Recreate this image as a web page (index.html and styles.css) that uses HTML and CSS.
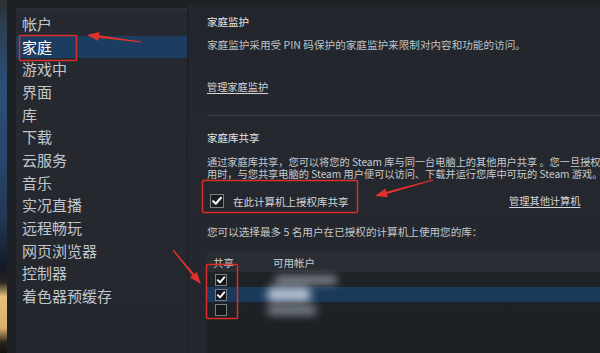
FILE: index.html
```html
<!DOCTYPE html>
<html lang="zh-CN">
<head>
<meta charset="utf-8">
<link rel="stylesheet" href="styles.css">
</head>
<body>
<div class="page">
  <div class="wall"></div>
  <div class="frame">
    <nav class="sidebar">
      <div class="item">帐户</div>
      <div class="item active">家庭</div>
      <div class="item">游戏中</div>
      <div class="item">界面</div>
      <div class="item">库</div>
      <div class="item">下载</div>
      <div class="item">云服务</div>
      <div class="item">音乐</div>
      <div class="item">实况直播</div>
      <div class="item">远程畅玩</div>
      <div class="item">网页浏览器</div>
      <div class="item">控制器</div>
      <div class="item">着色器预缓存</div>
    </nav>
    <main class="content">
      <div class="heading">家庭监护</div>
      <div class="desc">家庭监护采用受 PIN 码保护的家庭监护来限制对内容和功能的访问。</div>
      <div class="link first-link">管理家庭监护</div>
      <div class="sep"></div>
      <div class="heading h2">家庭库共享</div>
      <div class="para">
        <div>通过家庭库共享，您可以将您的 Steam 库与同一台电脑上的其他用户共享 。您一旦授权</div>
        <div>用时，与您共享电脑的 Steam 用户便可以访问、下载并运行您库中可玩的 Steam 游戏。</div>
      </div>
      <div class="checkrow">
        <div class="auth">
          <span class="box big checked"><svg viewBox="0 0 14 14" width="12" height="12"><path d="M2.5 7.2 L5.6 10.2 L11.6 3.2" fill="none" stroke="#fff" stroke-width="2.4" stroke-linecap="round" stroke-linejoin="round"/></svg></span>
          <span class="auth-label">在此计算机上授权库共享</span>
        </div>
        <span class="link">管理其他计算机</span>
      </div>
      <div class="note">您可以选择最多 5 名用户在已授权的计算机上使用您的库：</div>
      <div class="table">
        <div class="thead">
          <span class="col1">共享</span>
          <span class="col2">可用帐户</span>
        </div>
        <div class="row">
          <span class="col1"><span class="box small checked"><svg viewBox="0 0 14 14" width="10" height="10"><path d="M2.5 7.2 L5.6 10.2 L11.6 3.2" fill="none" stroke="#fff" stroke-width="2.6" stroke-linecap="round" stroke-linejoin="round"/></svg></span></span>
          <span class="col2"><span class="blur b1"></span></span>
        </div>
        <div class="row selected">
          <span class="col1"><span class="box small checked"><svg viewBox="0 0 14 14" width="10" height="10"><path d="M2.5 7.2 L5.6 10.2 L11.6 3.2" fill="none" stroke="#fff" stroke-width="2.6" stroke-linecap="round" stroke-linejoin="round"/></svg></span></span>
          <span class="col2"><span class="blur b2"></span></span>
        </div>
        <div class="row">
          <span class="col1"><span class="box small"></span></span>
          <span class="col2"><span class="blur b3"></span></span>
        </div>
      </div>
    </main>
  </div>
  <svg class="marks" width="600" height="353" viewBox="0 0 600 353">
    <g fill="none" stroke="#d8302a" stroke-width="1.5">
      <rect x="19.5" y="35.5" width="57" height="25" rx="1"/>
      <rect x="202.5" y="180.5" width="155" height="32" rx="1"/>
      <rect x="206.5" y="264.5" width="31" height="54" rx="1"/>
    </g>
    <g fill="#e0322b">
      <polygon points="141.06,41.5 99.05,35.35 99.48,32.08 87,35 98.32,41.0 98.75,37.73 140.94,42.5"/>
      <polygon points="433.16,180.58 386.89,193.97 387.77,197.15 375,196 385.37,188.47 386.25,191.65 432.84,179.42"/>
      <polygon points="172.54,250.38 192.44,275.5 189.9,277.6 201,284 196.84,271.88 194.3,273.98 173.46,249.62"/>
    </g>
  </svg>
</div>
</body>
</html>
```
FILE: styles.css
```css
* { box-sizing: border-box; }
html, body {
  margin: 0;
  padding: 0;
  width: 600px;
  height: 353px;
  overflow: hidden;
  background: #1c1f24;
  font-family: "Noto Sans CJK SC", "Noto Sans", sans-serif;
}
.page {
  position: relative;
  display: flex;
  width: 600px;
  height: 353px;
}
.wall {
  width: 7px;
  flex: none;
  background: linear-gradient(180deg, #2c3133 0%, #2d3f52 8%, #2b4f7a 25%, #2a466c 45%, #213754 62%, #141a26 76%, #2a241c 80%, #e4c07c 84%, #d8b06a 93%, #2a241c 97%, #111 100%);
}
.frame {
  flex: 1;
  display: flex;
  background: #1d2025;
  padding-left: 9px;
  padding-top: 8px;
}
.sidebar {
  width: 172px;
  flex: none;
  background: linear-gradient(180deg, #2d3037 0px, #262930 5px, #24272d 100%);
  padding-top: 5px;
  border-right: 1px solid #1a1c21;
}
.item {
  height: 22.67px;
  line-height: 22.67px;
  padding-left: 6px;
  font-size: 15px;
  color: #c3c6cb;
  white-space: nowrap;
}
.item.active {
  background: #1c3c60;
  color: #ffffff;
}
.content {
  flex: 1;
  margin-top: -8px;
  padding: 15px 0 0 19px;
  background: linear-gradient(180deg, #1c1e23 0px, #22252b 6px, #25282e 40%, #23262c 100%);
  overflow: hidden;
  white-space: nowrap;
  color: #bfc3c8;
  font-size: 10px;
}
.heading {
  line-height: 14px;
  height: 14px;
  font-size: 10.5px;
  color: #e4e7ea;
}
.desc {
  margin-top: 9px;
  line-height: 14px;
  height: 14px;
  font-size: 10.6px;
}
.link {
  line-height: 14px;
  height: 14px;
  font-size: 10.2px;
  color: #d2d5d9;
  text-decoration: underline;
  text-underline-offset: 2px;
}
.first-link {
  margin-top: 28px;
}
.sep {
  margin-top: 21px;
  height: 1px;
  background: #40444c;
}
.h2 {
  margin-top: 15px;
}
.para {
  margin-top: 11px;
  line-height: 12px;
  font-size: 10.2px;
  color: #c8ccd0;
}
.checkrow {
  margin-top: 14px;
  height: 14px;
  display: flex;
  align-items: center;
  justify-content: space-between;
  padding-right: 22px;
}
.auth {
  display: flex;
  align-items: center;
  padding-left: 3px;
}
.auth-label {
  margin-left: 9px;
  color: #d4d7db;
  font-size: 10.5px;
}
.box {
  display: inline-flex;
  align-items: center;
  justify-content: center;
  border: 1px solid #7a7e85;
  background: #1a1c21;
}
.box.big {
  width: 14px;
  height: 14px;
}
.box.small {
  width: 12px;
  height: 12px;
  background: #15171b;
}
.note {
  margin-top: 17px;
  line-height: 14px;
  height: 14px;
  font-size: 10.6px;
  color: #c3c7cc;
}
.table {
  margin-top: 13px;
  background: linear-gradient(180deg, #1f2227 0%, #1c1f24 100%);
  height: 120px;
}
.thead {
  height: 20px;
  display: flex;
  align-items: center;
  background: #2a2d34;
  color: #c9ccd1;
  font-size: 10.5px;
}
.col1 {
  width: 66px;
  padding-left: 6px;
  display: flex;
  align-items: center;
}
.row .col1 {
  padding-left: 8px;
}
.col2 {
  display: flex;
  align-items: center;
}
.row {
  height: 15px;
  display: flex;
  align-items: center;
}
.row.selected {
  background: #1b3a5b;
}
.blur {
  display: block;
  border-radius: 6px;
  filter: blur(4px);
}
.b1 {
  width: 62px;
  height: 8px;
  margin-left: 2px;
  background: #8a929d;
}
.b2 {
  width: 44px;
  height: 15px;
  margin-left: -6px;
  background: #b4bfce;
}
.b3 {
  width: 50px;
  height: 10px;
  margin-left: -6px;
  background: #7a808a;
}
.marks {
  position: absolute;
  left: 0;
  top: 0;
  pointer-events: none;
}
```
